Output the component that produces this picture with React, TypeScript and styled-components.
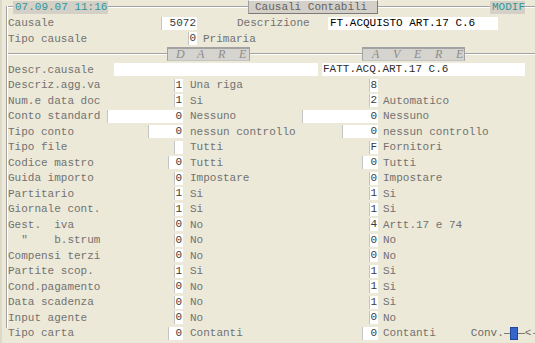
import React from 'react';
import styled, { createGlobalStyle } from 'styled-components';

const GlobalStyle = createGlobalStyle`
  html, body { margin: 0; padding: 0; background: #ece9d8; }
  body { overflow: hidden; }
`;

const MONO = `"Liberation Mono", "DejaVu Sans Mono", monospace`;

const Page = styled.div`
  width: 535px;
  height: 343px;
  box-sizing: border-box;
  background: #ece9d8;
  border-left: 2px solid #dcd9c9;
  padding-left: 4px;
  font-family: ${MONO};
  font-size: 11px;
  color: #727272;
  overflow: hidden;
`;

const Frame = styled.div`
  position: relative;
  &::before {
    content: '';
    position: absolute;
    left: 0;
    top: 6px;
    height: 322px;
    width: 0;
    border-left: 1px solid #a3a3a3;
    border-right: 1px solid #ffffff;
  }
`;

const Header = styled.div`
  display: flex;
  align-items: flex-start;
  height: 15.5px;
`;

const Rule = styled.div<{ $w: number }>`
  flex: none;
  width: ${p => p.$w}px;
  height: 0;
  border-top: 1px solid #a3a3a3;
  border-bottom: 1px solid #ffffff;
`;

const HeaderRule = styled(Rule)`
  margin-top: 6px;
`;

const StatusBox = styled.div<{ $w: number }>`
  flex: none;
  width: ${p => p.$w}px;
  height: 13px;
  margin-top: 1px;
  box-sizing: border-box;
  padding-left: 2px;
  background: #d4d0c8;
  color: #2f9797;
  line-height: 13px;
  white-space: pre;
`;

const TitleBox = styled.div`
  flex: none;
  width: 130px;
  height: 14px;
  box-sizing: border-box;
  padding-left: 6px;
  background: #d4d0c8;
  color: #636363;
  line-height: 12px;
  border: 1px solid;
  border-color: #f4f4f4 #7a7a7a #7a7a7a #a0a0a0;
  white-space: pre;
`;

const Row = styled.div`
  display: flex;
  align-items: center;
  height: 15.5px;
  padding-left: 2px;
  white-space: pre;
`;

const SepRow = styled.div`
  display: flex;
  align-items: center;
  height: 15.5px;
`;

const Cell = styled.div<{ $w: number }>`
  flex: none;
  width: ${p => p.$w}px;
  display: flex;
  align-items: center;
  justify-content: space-between;
`;

const Label = styled.span`
  color: #727272;
`;

const Desc = styled.span<{ $ml?: number }>`
  color: #727272;
  margin-left: ${p => p.$ml ?? 0}px;
`;

const ValueBox = styled.span<{ $w: number; $ml?: number }>`
  display: block;
  flex: none;
  width: ${p => p.$w}px;
  height: 13px;
  margin-left: ${p => p.$ml ?? 0}px;
  box-sizing: border-box;
  padding-right: 1px;
  background: #ffffff;
  box-shadow: inset 1px 0 #c4c4c4;
  color: #3a3a3a;
  line-height: 13px;
  text-align: right;
`;

const TextBox = styled.span<{ $w: number; $ml?: number; $strong?: boolean }>`
  display: block;
  flex: none;
  width: ${p => p.$w}px;
  height: 13px;
  margin-left: ${p => p.$ml ?? 0}px;
  box-sizing: border-box;
  padding-left: ${p => (p.$strong ? 2 : 1)}px;
  background: #ffffff;
  color: ${p => (p.$strong ? '#000000' : '#2e2e2e')};
  line-height: 13px;
`;

const PanelTag = styled.div<{ $w: number; $pl: number }>`
  flex: none;
  width: ${p => p.$w}px;
  height: 14px;
  box-sizing: border-box;
  padding-left: ${p => p.$pl}px;
  display: flex;
  align-items: center;
  gap: 14px;
  background: #d6d4ce;
  border: 1px solid #a2a2a2;
  border-top-width: 2px;
  border-bottom-color: #c4c4c4;
  font-family: "Liberation Serif", "DejaVu Serif", serif;
  font-style: italic;
  font-size: 12px;
  color: #8c8c8c;
`;

const TagLetter = styled.span`
  display: inline-block;
  width: 7px;
  text-align: center;
`;

const RightDesc = styled.div`
  flex: 1;
  display: flex;
  align-items: center;
  margin-left: 5px;
`;

const Conv = styled.div`
  display: flex;
  align-items: center;
  margin-left: 35px;
  color: #6a6a6a;
`;

const Wire = styled.span<{ $w: number }>`
  display: block;
  width: ${p => p.$w}px;
  height: 0;
  border-top: 1px solid #7a7a7a;
`;

const Cursor = styled.span`
  display: block;
  width: 8px;
  height: 13px;
  box-sizing: border-box;
  background: #3566c9;
  border: 1px solid #23479a;
`;

type Side = { v: string; w: number; d: string };
type Line = { label: string; l: Side; r: Side };

const lines: Line[] = [
  { label: 'Descriz.agg.va', l: { v: '1', w: 9, d: 'Una riga' }, r: { v: '8', w: 9, d: '' } },
  { label: 'Num.e data doc', l: { v: '1', w: 9, d: 'Si' }, r: { v: '2', w: 9, d: 'Automatico' } },
  { label: 'Conto standard', l: { v: '0', w: 76, d: 'Nessuno' }, r: { v: '0', w: 76, d: 'Nessuno' } },
  { label: 'Tipo conto', l: { v: '0', w: 35, d: 'nessun controllo' }, r: { v: '0', w: 36, d: 'nessun controllo' } },
  { label: 'Tipo file', l: { v: '', w: 9, d: 'Tutti' }, r: { v: 'F', w: 9, d: 'Fornitori' } },
  { label: 'Codice mastro', l: { v: '0', w: 15, d: 'Tutti' }, r: { v: '0', w: 16, d: 'Tutti' } },
  { label: 'Guida importo', l: { v: '0', w: 9, d: 'Impostare' }, r: { v: '0', w: 9, d: 'Impostare' } },
  { label: 'Partitario', l: { v: '1', w: 9, d: 'Si' }, r: { v: '1', w: 9, d: 'Si' } },
  { label: 'Giornale cont.', l: { v: '1', w: 9, d: 'Si' }, r: { v: '1', w: 9, d: 'Si' } },
  { label: 'Gest.  iva', l: { v: '0', w: 9, d: 'No' }, r: { v: '4', w: 9, d: 'Artt.17 e 74' } },
  { label: '  "    b.strum', l: { v: '0', w: 9, d: 'No' }, r: { v: '0', w: 9, d: 'No' } },
  { label: 'Compensi terzi', l: { v: '0', w: 9, d: 'No' }, r: { v: '0', w: 9, d: 'No' } },
  { label: 'Partite scop.', l: { v: '1', w: 9, d: 'Si' }, r: { v: '1', w: 9, d: 'Si' } },
  { label: 'Cond.pagamento', l: { v: '0', w: 9, d: 'No' }, r: { v: '1', w: 9, d: 'Si' } },
  { label: 'Data scadenza', l: { v: '0', w: 9, d: 'No' }, r: { v: '1', w: 9, d: 'Si' } },
  { label: 'Input agente', l: { v: '0', w: 9, d: 'No' }, r: { v: '0', w: 9, d: 'No' } },
  { label: 'Tipo carta', l: { v: '0', w: 15, d: 'Contanti' }, r: { v: '0', w: 16, d: 'Contanti' } },
];

const Letters: React.FC<{ text: string }> = ({ text }) => (
  <>
    {text.split('').map((c, i) => (
      <TagLetter key={i}>{c}</TagLetter>
    ))}
  </>
);

export default function App() {
  return (
    <>
      <GlobalStyle />
      <Page>
        <Frame>
          <Header>
            <HeaderRule $w={7} />
            <StatusBox $w={95}>07.09.07 11:16</StatusBox>
            <HeaderRule $w={140} />
            <TitleBox>Causali Contabili</TitleBox>
            <HeaderRule $w={112} />
            <StatusBox $w={35}>MODIF</StatusBox>
            <HeaderRule $w={10} />
          </Header>

          <Row>
            <Cell $w={189}>
              <Label>Causale</Label>
              <ValueBox $w={36}>5072</ValueBox>
            </Cell>
            <Desc $ml={40} style={{ width: 91 }}>Descrizione</Desc>
            <TextBox $w={170} $strong>FT.ACQUISTO ART.17 C.6</TextBox>
          </Row>

          <Row>
            <Cell $w={189}>
              <Label>Tipo causale</Label>
              <ValueBox $w={9}>0</ValueBox>
            </Cell>
            <Desc $ml={6}>Primaria</Desc>
          </Row>

          <SepRow>
            <Rule $w={161} />
            <PanelTag $w={83} $pl={8}>
              <Letters text="DARE" />
            </PanelTag>
            <Rule $w={112} />
            <PanelTag $w={103} $pl={9}>
              <Letters text="AVERE" />
            </PanelTag>
            <Rule $w={70} />
          </SepRow>

          <Row>
            <Cell $w={106}>
              <Label>Descr.causale</Label>
            </Cell>
            <TextBox $w={204} />
            <TextBox $w={203} $ml={4}>FATT.ACQ.ART.17 C.6</TextBox>
          </Row>

          {lines.map((ln, i) => (
            <Row key={i}>
              <Cell $w={175}>
                <Label>{ln.label}</Label>
                <ValueBox $w={ln.l.w}>{ln.l.v}</ValueBox>
              </Cell>
              <Cell $w={188} style={{ marginLeft: 7 }}>
                <Desc>{ln.l.d}</Desc>
                <ValueBox $w={ln.r.w}>{ln.r.v}</ValueBox>
              </Cell>
              <RightDesc>
                <Desc>{ln.r.d}</Desc>
                {i === lines.length - 1 && (
                  <Conv>
                    <span>Conv.</span>
                    <Wire $w={6} />
                    <Cursor />
                    <Wire $w={7} />
                    <span>{'<-'}</span>
                  </Conv>
                )}
              </RightDesc>
            </Row>
          ))}
        </Frame>
      </Page>
    </>
  );
}
